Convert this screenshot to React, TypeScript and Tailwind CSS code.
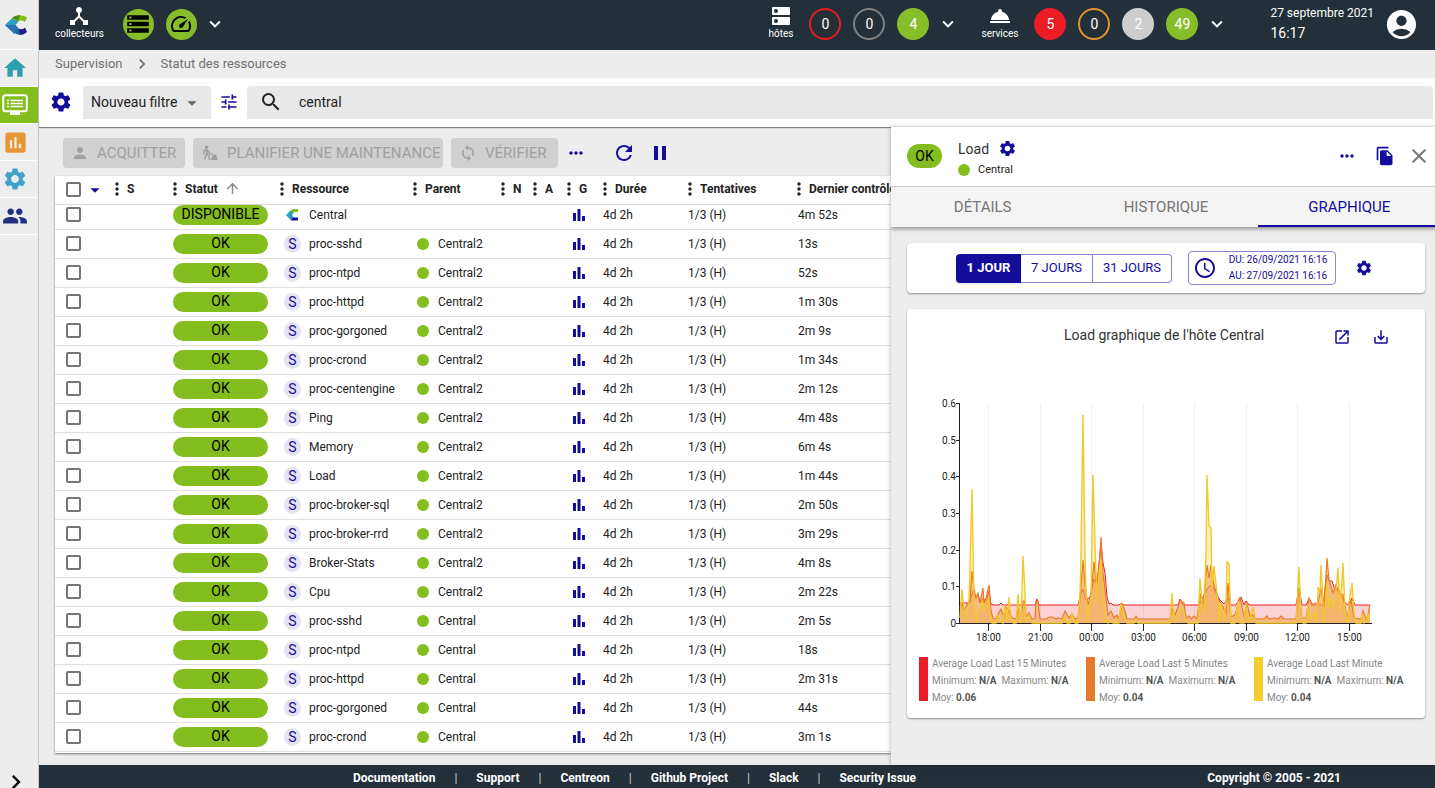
import React from "react";
import {
  MdAccessTime,
  MdAccountCircle,
  MdArrowDropDown,
  MdArrowUpward,
  MdChevronRight,
  MdClose,
  MdDeviceHub,
  MdDns,
  MdExpandMore,
  MdFileCopy,
  MdHome,
  MdInsertChart,
  MdLaunch,
  MdMoreHoriz,
  MdMoreVert,
  MdPause,
  MdPeople,
  MdPerson,
  MdRefresh,
  MdRoomService,
  MdSaveAlt,
  MdSearch,
  MdSettings,
  MdSpeed,
  MdStorage,
  MdSync,
  MdTune,
} from "react-icons/md";

const Logo: React.FC<{ className: string }> = ({ className }) => (
  <svg viewBox="0 0 24 22" className={className} aria-hidden="true">
    <path d="M1 11 10 2.5 15 7 11.5 11 15 15 10 19.500Z" fill="#2a9fc4" />
    <path d="M1 11h10.500L15 15l-4.500 5Z" fill="#2b74b8" />
    <path d="M8.500 4C12 .5 19 .5 23 3.500L21 8c-2.500-2-5-2-7.500-.5L9 5Z" fill="#84bd1e" />
    <path d="M8.500 4C10 2 13 1 16 1.200L14 7Z" fill="#4f8a10" />
    <path d="M10 18l4.500-3.500c1.500 1 3 1.200 4 .8L20 20c-4 1.600-8 .8-10-2Z" fill="#2a5fae" />
    <path d="M15.500 14.800c2 .8 4 .2 5.500-1.300l2 4.500c-2 2-5 3-7.500 2.500Z" fill="#221d84" />
  </svg>
);

const SmallLogo = () => (
  <svg viewBox="0 0 13 12" className="h-3 w-[13px]" aria-hidden="true">
    <path d="M0 6 5 1l3 2-2 3 2 3-3 2.500Z" fill="#2a9fc4" />
    <path d="M5 1 7 0h5v3H8L7 5Z" fill="#84bd1e" />
    <path d="M5 11.500 7 8.500h5v3Z" fill="#16109c" />
  </svg>
);

const Monitor = () => (
  <svg viewBox="0 0 26 22" className="h-[22px] w-[26px]" fill="none" aria-hidden="true">
    <rect x="1.250" y="1.250" width="23.500" height="16" rx="2" stroke="#fff" strokeWidth="2" />
    <path d="M8 18h10v3H8z" fill="#fff" />
    <path d="M5 6.500h2M8.500 6.500H21M5 9.500h2M8.500 9.500H21M5 12.500h2M8.500 12.500H21" stroke="#fff" strokeWidth="1.500" />
  </svg>
);

const Worker = () => (
  <svg viewBox="0 0 16 16" className="h-4 w-4" aria-hidden="true">
    <circle cx="4.500" cy="2.200" r="1.600" fill="#9e9e9e" />
    <path
      d="M4.500 4.500 2 6v3.500M4.500 4.500l.5 4-2.500 6M5 8.500l2 2.500.5 4M5 5l2.500 3 3 2"
      stroke="#9e9e9e"
      strokeWidth="1.500"
      fill="none"
    />
    <path d="M8.500 15 11 10l3-.5L15.500 15Z" fill="#9e9e9e" />
  </svg>
);

const Bars = () => (
  <svg viewBox="0 0 14 14" className="h-[14px] w-[14px]" fill="#140d9c" aria-hidden="true">
    <path d="M1 5h3v8H1zM5.500 1h3v12h-3zM10 8h3v5h-3z" />
  </svg>
);

interface CounterProps {
  value: string;
  tone: string;
}

const Counter: React.FC<CounterProps> = ({ value, tone }) => (
  <a
    href="#"
    className={`flex h-8 w-8 items-center justify-center rounded-full border-2 text-sm text-white ${tone}`}
  >
    {value}
  </a>
);

interface TopLabelProps {
  label: string;
  icon: React.ReactNode;
}

const TopLabel: React.FC<TopLabelProps> = ({ label, icon }) => (
  <div className="flex flex-col items-center pb-1 text-[10px] leading-3 text-white">
    {icon}
    <span>{label}</span>
  </div>
);

const Chevron = () => (
  <button aria-label="Ouvrir" className="flex text-white">
    <MdExpandMore size={22} />
  </button>
);

const TopBar = () => (
  <header className="flex h-[50px] shrink-0 items-center bg-[#232f39] pr-4 pb-[2px] pl-4">
    <TopLabel label="collecteurs" icon={<MdDeviceHub size={24} />} />
    <button aria-label="Base de données" className="ml-[19px] flex h-[31px] w-[31px] items-center justify-center rounded-full bg-[#87bd2b]">
      <MdStorage size={26} />
    </button>
    <button aria-label="Latence" className="mr-[7px] ml-3 flex h-[31px] w-[31px] items-center justify-center rounded-full bg-[#87bd2b]">
      <MdSpeed size={24} />
    </button>
    <Chevron />
    <div className="ml-auto flex items-center gap-3">
      <TopLabel label="hôtes" icon={<MdDns size={24} />} />
      <div className="ml-1 flex items-center gap-3">
        <Counter value="0" tone="border-[#ed1c24]" />
        <Counter value="0" tone="border-[#818285]" />
        <Counter value="4" tone="border-[#87bd2b] bg-[#87bd2b]" />
      </div>
      <div className="-ml-1">
        <Chevron />
      </div>
      <div className="ml-[10px]">
        <TopLabel label="services" icon={<MdRoomService size={24} />} />
      </div>
      <div className="ml-1 flex items-center gap-3">
        <Counter value="5" tone="border-[#ed1c24] bg-[#ed1c24]" />
        <Counter value="0" tone="border-[#e69330]" />
        <Counter value="2" tone="border-[#cdcdcd] bg-[#cdcdcd]" />
        <Counter value="49" tone="border-[#87bd2b] bg-[#87bd2b]" />
      </div>
      <div className="-ml-1">
        <Chevron />
      </div>
    </div>
    <div className="ml-[42px] pb-[3px] text-white">
      <p className="text-xs leading-5">27 septembre 2021</p>
      <p className="text-sm leading-5">16:17</p>
    </div>
    <button aria-label="Profil" className="ml-[10px] text-white">
      <MdAccountCircle size={35} />
    </button>
  </header>
);

const menu = [
  { label: "Accueil", tone: "text-[#2f9fb0]", icon: <MdHome size={26} /> },
  { label: "Supervision", tone: "bg-[#84bd1e]", icon: <Monitor /> },
  { label: "Rapports", tone: "text-[#e79634]", icon: <MdInsertChart size={27} /> },
  { label: "Configuration", tone: "text-[#3fa3c9]", icon: <MdSettings size={26} /> },
  { label: "Administration", tone: "text-[#232f80]", icon: <MdPeople size={26} /> },
];

const Sidebar = () => (
  <aside className="flex w-[39px] shrink-0 flex-col border-r border-[#c8c8c8] bg-[#ededed]">
    <a href="#" aria-label="Centreon" className="flex h-[50px] items-center border-b border-white pl-1">
      <Logo className="h-[22px] w-6" />
    </a>
    {menu.map((item) => (
      <a
        key={item.label}
        href="#"
        aria-label={item.label}
        className={`flex h-[37px] items-center border-b border-white pl-[2px] ${item.tone}`}
      >
        {item.icon}
      </a>
    ))}
    <button aria-label="Déplier le menu" className="mt-auto -mb-2 pl-[2px]">
      <MdChevronRight size={28} />
    </button>
  </aside>
);

const FilterBar = () => (
  <div className="z-10 flex h-[49px] shrink-0 items-center bg-white pr-[2px] pb-px pl-[10px] shadow-[0_1px_1px_rgba(0,0,0,0.45)]">
    <button aria-label="Options" className="text-[#140d9c]">
      <MdSettings size={24} />
    </button>
    <div className="relative ml-[10px]">
      <select
        aria-label="Filtre"
        className="block h-[33px] w-32 appearance-none rounded-t-sm bg-[#e8e8e8] pl-2 text-sm text-[#222]"
      >
        <option>Nouveau filtre</option>
      </select>
      <MdArrowDropDown size={22} className="pointer-events-none absolute top-[6px] right-2 text-[#666]" />
    </div>
    <button aria-label="Critères" className="mx-2 text-[#140d9c]">
      <MdTune size={20} />
    </button>
    <label className="flex h-[33px] flex-1 items-center rounded-t-sm bg-[#e8e8e8] pl-3">
      <MdSearch size={24} className="text-[#222]" />
      <input
        aria-label="Recherche"
        defaultValue="central"
        className="ml-4 flex-1 bg-transparent text-sm text-[#222] outline-none"
      />
    </label>
  </div>
);

interface ActionProps {
  label: string;
  icon: React.ReactNode;
  width: string;
}

const Action: React.FC<ActionProps> = ({ label, icon, width }) => (
  <button
    disabled
    className={`flex h-[30px] shrink-0 items-center gap-2 rounded bg-[#d0d0d0] pl-2 text-[15px] whitespace-nowrap text-[#a0a0a0] ${width}`}
  >
    <span className="flex w-[18px] justify-center">{icon}</span>
    {label}
  </button>
);

const Checkbox: React.FC<{ label: string }> = ({ label }) => (
  <input
    type="checkbox"
    aria-label={label}
    className="block h-[15px] w-[15px] shrink-0 appearance-none rounded-xs border-2 border-[#757575] bg-white"
  />
);

const headers = ["S", "Statut", "Ressource", "Parent", "N", "A", "G", "Durée", "Tentatives", "Dernier contrôle"];

const rows = [
  ["Central", "", "4m 52s"],
  ["proc-sshd", "Central2", "13s"],
  ["proc-ntpd", "Central2", "52s"],
  ["proc-httpd", "Central2", "1m 30s"],
  ["proc-gorgoned", "Central2", "2m 9s"],
  ["proc-crond", "Central2", "1m 34s"],
  ["proc-centengine", "Central2", "2m 12s"],
  ["Ping", "Central2", "4m 48s"],
  ["Memory", "Central2", "6m 4s"],
  ["Load", "Central2", "1m 44s"],
  ["proc-broker-sql", "Central2", "2m 50s"],
  ["proc-broker-rrd", "Central2", "3m 29s"],
  ["Broker-Stats", "Central2", "4m 8s"],
  ["Cpu", "Central2", "2m 22s"],
  ["proc-sshd", "Central", "2m 5s"],
  ["proc-ntpd", "Central", "18s"],
  ["proc-httpd", "Central", "2m 31s"],
  ["proc-gorgoned", "Central", "44s"],
  ["proc-crond", "Central", "3m 1s"],
];

const Listing = () => (
  <div className="mt-2 mb-3 ml-4 flex-1 overflow-hidden bg-white shadow-[0_1px_2px_rgba(0,0,0,0.5)]">
    <table className="w-[900px] table-fixed border-collapse text-xs text-[#222]">
      <colgroup>
        <col className="w-[52px]" />
        <col className="w-[58px]" />
        <col className="w-[107px]" />
        <col className="w-[133px]" />
        <col className="w-[88px]" />
        <col className="w-8" />
        <col className="w-[34px]" />
        <col className="w-9" />
        <col className="w-[85px]" />
        <col className="w-[109px]" />
        <col />
      </colgroup>
      <thead>
        <tr className="h-7 border-b border-[#d8d8d8]">
          <th>
            <div className="flex items-center pl-[11px]">
              <Checkbox label="Tout sélectionner" />
              <MdArrowDropDown size={22} className="ml-[3px] shrink-0 text-[#140d9c]" />
            </div>
          </th>
          {headers.map((header) => (
            <th key={header}>
              <div className="flex items-center pb-[2px] whitespace-nowrap">
                <MdMoreVert size={20} className="shrink-0" />
                {header}
                {header === "Statut" && <MdArrowUpward size={17} className="ml-[6px] text-[#888]" />}
              </div>
            </th>
          ))}
        </tr>
      </thead>
      <tbody>
        {rows.map(([name, parent, last], index) => (
          <tr
            key={index}
            className={`border-b border-[#dedede] ${index === 0 ? "h-6 [&>td]:pb-1" : "h-[29px]"}`}
          >
            <td className="pl-[11px]">
              <Checkbox label={`${name} ${last}`} />
            </td>
            <td></td>
            <td className="pl-2">
              <div className="h-5 w-[95px] rounded-full bg-[#84bd1e] text-center text-sm leading-[18px] text-black">
                {index === 0 ? "DISPONIBLE" : "OK"}
              </div>
            </td>
            <td className="pl-3">
              <div className="flex items-center gap-2">
                {index === 0 ? (
                  <span className="flex w-[17px] justify-center">
                    <SmallLogo />
                  </span>
                ) : (
                  <span className="h-[18px] w-[17px] rounded-full bg-[#e4e3f2] text-center text-sm leading-[18px] text-[#140d9c]">
                    S
                  </span>
                )}
                <a href="#" className="whitespace-nowrap">{name}</a>
              </div>
            </td>
            <td className="pl-3">
              {parent && (
                <div className="flex items-center gap-[9px]">
                  <span className="h-3 w-3 rounded-full bg-[#84bd1e]" />
                  <a href="#">{parent}</a>
                </div>
              )}
            </td>
            <td></td>
            <td></td>
            <td className="pl-[13px]">
              <Bars />
            </td>
            <td className="pl-2">4d 2h</td>
            <td className="pl-2">1/3 (H)</td>
            <td className="pl-[9px]">{last}</td>
          </tr>
        ))}
      </tbody>
    </table>
  </div>
);

// pairs of x offset and height above the zero line
const red =
  "0 20 10 20 11 25 13 32 16 26 18 28 21 20 23 25 26 20 29 32 31 19 33 18 39 18 41 20 43 18 75 18 77 24 79 18 118 18 121 30 123 34 126 22 130 26 134 44 137 38 141 80 143 60 145 50 147 26 149 19 151 20 153 18 159 18 161 20 164 18 218 18 220 24 223 18 239 18 241 22 247 34 251 38 255 33 259 24 264 19 268 25 271 18 276 18 278 22 281 26 284 18 286 22 289 18 336 18 339 35 342 18 346 18 349 24 353 18 363 18 367 48 369 42 372 42 375 33 378 35 380 30 385 20 388 18 392 25 395 18 410 18";
const orange =
  "0 15 2 20 4 13 6 16 8 20 10 24 12 52 14 34 16 25 18 30 20 20 23 35 24 20 26 25 29 38 31 12 33 5 36 4 38 9 41 14 44 6 46 16 49 12 52 5 56 4 59 15 61 5 63 22 65 22 66 6 69 10 72 4 75 4 76 22 78 22 80 4 86 4 89 6 92 6 96 4 98 5 102 4 105 12 109 5 112 9 115 4 118 5 120 24 123 63 125 38 128 18 131 28 134 61 136 40 139 55 141 86 143 50 146 25 148 8 151 12 154 5 157 8 159 4 162 19 165 12 167 4 174 4 176 7 178 4 210 4 212 14 215 8 218 16 220 23 224 20 226 5 229 7 231 4 234 7 237 4 239 20 241 30 243 15 247 58 249 45 251 58 254 38 258 24 262 18 266 10 268 40 271 6 275 8 280 26 284 6 287 19 290 7 293 8 296 4 304 4 307 7 309 4 315 5 318 4 321 7 324 4 336 4 339 35 342 5 346 5 349 25 352 18 355 20 358 20 361 35 364 15 367 65 369 43 373 30 376 38 379 30 383 28 387 5 391 24 394 5 401 4 403 12 406 4 408 9 410 18";
const yellow =
  "0 5 2 34 4 14 6 3 8 12 9 20 12 134 14 20 16 0 18 12 20 14 22 22 24 12 26 20 29 25 30 10 32 0 36 0 38 9 40 2 43 0 45 18 47 2 49 26 51 4 53 0 56 0 58 29 60 3 61 0 63 67 65 30 66 0 69 8 72 0 102 0 104 6 107 0 110 0 112 9 115 0 118 0 120 30 121 70 123 208 125 70 126 30 128 0 129 15 131 25 133 148 135 80 137 20 139 50 141 63 143 30 145 2 148 0 150 4 153 0 159 0 161 20 164 8 167 0 174 0 176 4 178 0 210 0 212 30 213 15 215 0 218 8 220 14 223 15 225 5 228 0 238 0 240 45 242 20 244 10 246 70 247 148 249 97 251 95 252 35 254 57 257 30 259 0 261 20 264 2 266 20 267 62 269 58 271 0 275 0 278 22 280 0 284 0 286 20 289 0 293 16 296 0 336 0 339 56 341 10 343 0 346 0 348 18 351 3 354 10 357 2 358 36 360 30 361 58 364 0 367 40 369 15 371 25 373 15 375 18 378 55 380 10 383 60 385 12 388 0 389 20 392 40 394 10 396 0 401 0 402 10 404 0 408 9 410 0";

const ORIGIN_X = 53;
const ORIGIN_Y = 228;

const toLine = (series: string) => {
  const values = series.split(" ").map(Number);
  const points: string[] = [];
  for (let i = 0; i < values.length; i += 2) {
    points.push(`${ORIGIN_X + values[i]} ${ORIGIN_Y - values[i + 1]}`);
  }
  return `M${points.join("L")}`;
};

const toArea = (series: string) => `${toLine(series)}V${ORIGIN_Y}H${ORIGIN_X}Z`;

const Chart = () => (
  <svg viewBox="0 0 518 250" className="block w-full text-[10px]" role="img" aria-label="Load">
    {["18:00", "21:00", "00:00", "03:00", "06:00", "09:00", "12:00", "15:00"].map((hour, i) => {
      const x = Math.round(82 + i * 51.5) - 0.5;
      return (
        <g key={hour}>
          <path d={`M${x} 8V228`} stroke="#f1f1f1" />
          <path d={`M${x} 228v8`} stroke="#222" />
          <text x={x} y="246" textAnchor="middle" fill="#222">
            {hour}
          </text>
        </g>
      );
    })}
    {["0", "0.1", "0.2", "0.3", "0.4", "0.5", "0.6"].map((value, i) => {
      const y = Math.round(228 - i * 36.7) + 0.5;
      return (
        <g key={value}>
          <path d={`M49 ${y}h4`} stroke="#222" />
          <text x="49" y={y + 3} textAnchor="end" fill="#222">
            {value}
          </text>
        </g>
      );
    })}
    <path d="M52.5 8V228.500H465" stroke="#222" fill="none" />
    <path d={toArea(yellow)} fill="#f3cd2e" fillOpacity="0.3" />
    <path d={toArea(red)} fill="#ed1c24" fillOpacity="0.2" />
    <path d={toLine(red)} fill="none" stroke="#ed1c24" />
    <path d={toArea(orange)} fill="#f2a850" fillOpacity="0.6" />
    <path d={toLine(orange)} fill="none" stroke="#e6792b" strokeWidth="1.200" />
    <path d={toLine(yellow)} fill="none" stroke="#f1c92c" strokeWidth="1.400" />
  </svg>
);

const legend = [
  { name: "Average Load Last 15 Minutes", average: "0.06", tone: "bg-[#ed1c24]" },
  { name: "Average Load Last 5 Minutes", average: "0.04", tone: "bg-[#e6792b]" },
  { name: "Average Load Last Minute", average: "0.04", tone: "bg-[#f3cd2e]" },
];

const GraphCard = () => (
  <section className="mt-4 rounded bg-white pb-3 shadow-[0_1px_2px_rgba(0,0,0,0.4)]">
    <div className="flex h-[86px] items-start pt-4 pr-[35px]">
      <h2 className="ml-[157px] flex-1 text-sm leading-5 text-[#333]">Load graphique de l'hôte Central</h2>
      <button aria-label="Ouvrir" className="mt-[3px] text-[#140d9c]">
        <MdLaunch size={18} />
      </button>
      <button aria-label="Exporter" className="mt-[3px] ml-[21px] text-[#140d9c]">
        <MdSaveAlt size={18} />
      </button>
    </div>
    <Chart />
    <div className="mt-3 grid grid-cols-[167px_168px_1fr] pl-3 text-[10px] leading-[17px] whitespace-nowrap text-[#888]">
      {legend.map((entry) => (
        <div key={entry.name} className="flex items-start gap-1">
          <span className={`h-11 w-[9px] shrink-0 ${entry.tone}`} />
          <div className="-mt-[2px]">
            <p>{entry.name}</p>
            <p>
              Minimum: <b className="text-[#555]">N/A</b>&nbsp; Maximum: <b className="text-[#555]">N/A</b>
            </p>
            <p>
              Moy: <b className="text-[#555]">{entry.average}</b>
            </p>
          </div>
        </div>
      ))}
    </div>
  </section>
);

const DetailsPanel = () => (
  <aside className="z-20 w-[544px] shrink-0 overflow-hidden bg-[#ededed] shadow-[0_0_4px_rgba(0,0,0,0.35)]">
    <div className="flex h-full w-[550px] flex-col">
      <div className="flex h-[60px] shrink-0 items-center border-b border-[#d4d4d4] bg-white pr-[10px] pb-px pl-4">
        <span className="flex h-6 w-[35px] items-center justify-center rounded-full bg-[#84bd1e] text-sm text-black">
          OK
        </span>
        <div className="ml-4 flex-1">
          <div className="flex items-center gap-[9px] pt-1 text-sm leading-5 text-[#333]">
            Load
            <button aria-label="Configurer" className="text-[#140d9c]">
              <MdSettings size={19} />
            </button>
          </div>
          <div className="mt-[3px] flex items-center gap-2 text-[11px] leading-4 text-[#222]">
            <span className="h-3 w-3 rounded-full bg-[#84bd1e]" />
            <a href="#">Central</a>
          </div>
        </div>
        <button aria-label="Plus" className="text-[#140d9c]">
          <MdMoreHoriz size={20} />
        </button>
        <button aria-label="Copier" className="ml-[18px] text-[#140d9c]">
          <MdFileCopy size={20} />
        </button>
        <button aria-label="Fermer" className="ml-3 text-[#757575]">
          <MdClose size={24} />
        </button>
      </div>
      <div className="z-10 grid h-10 shrink-0 grid-cols-3 bg-[#f4f4f4] text-[15px] text-[#757575] shadow-[0_2px_4px_rgba(0,0,0,0.4)]">
        <button>DÉTAILS</button>
        <button>HISTORIQUE</button>
        <button className="border-b-2 border-[#140d9c] pt-[2px] text-[#140d9c]">GRAPHIQUE</button>
      </div>
      <div className="px-4 pt-4">
        <div className="flex h-[50px] items-center justify-center gap-4 rounded bg-white shadow-[0_1px_2px_rgba(0,0,0,0.4)]">
          <div className="flex h-[29px] text-[13px] text-[#140d9c]">
            <button className="w-[65px] rounded-l bg-[#140d9c] font-bold text-white shadow">1 JOUR</button>
            <button className="w-[72px] border border-l-0 border-[#8a86cd]">7 JOURS</button>
            <button className="w-[79px] rounded-r border border-l-0 border-[#8a86cd]">31 JOURS</button>
          </div>
          <button className="flex h-[34px] w-[148px] items-center gap-2 rounded border border-[#8a86cd] px-1 text-[10px] text-[#140d9c]">
            <MdAccessTime size={24} className="shrink-0" />
            <span className="flex-1 text-center leading-4 whitespace-nowrap">
              DU: 26/09/2021 16:16
              <br />
              AU: 27/09/2021 16:16
            </span>
          </button>
          <button aria-label="Options du graphique" className="flex w-6 justify-center text-[#140d9c]">
            <MdSettings size={18} />
          </button>
        </div>
        <GraphCard />
      </div>
    </div>
  </aside>
);

const links = ["Documentation", "Support", "Centreon", "Github Project", "Slack", "Security Issue"];

const Footer = () => (
  <footer className="flex h-[23px] shrink-0 items-center justify-between bg-[#232f39] pt-[3px] pr-[94px] pl-[314px] text-xs font-bold text-white">
    <nav className="flex items-center">
      {links.map((link, i) => (
        <React.Fragment key={link}>
          {i > 0 && <span className="mx-[19px] font-normal text-[#ccc]">|</span>}
          <a href="#">{link}</a>
        </React.Fragment>
      ))}
    </nav>
    <span>Copyright © 2005 - 2021</span>
  </footer>
);

const App: React.FC = () => {
  return (
    <div className="flex h-screen overflow-hidden bg-[#ededed] font-['Roboto',sans-serif]">
      <Sidebar />
      <div className="flex min-w-0 flex-1 flex-col">
        <TopBar />
        <nav className="flex h-7 shrink-0 items-center pl-4 text-[13px] text-[#707070]">
          <a href="#">Supervision</a>
          <MdChevronRight size={20} className="mx-[9px]" />
          <a href="#">Statut des ressources</a>
        </nav>
        <FilterBar />
        <div className="flex min-h-0 flex-1">
          <main className="flex min-w-0 flex-1 flex-col">
            <div className="mt-[11px] flex items-center gap-2 pl-6">
              <Action label="ACQUITTER" icon={<MdPerson size={18} />} width="w-[122px]" />
              <Action label="PLANIFIER UNE MAINTENANCE" icon={<Worker />} width="w-[250px]" />
              <Action label="VÉRIFIER" icon={<MdSync size={18} />} width="w-[107px]" />
              <button aria-label="Plus d'actions" className="text-[#140d9c]">
                <MdMoreHoriz size={20} />
              </button>
              <button aria-label="Actualiser" className="ml-[18px] text-[#140d9c]">
                <MdRefresh size={24} />
              </button>
              <button aria-label="Pause" className="ml-1 text-[#140d9c]">
                <MdPause size={24} />
              </button>
            </div>
            <Listing />
          </main>
          <DetailsPanel />
        </div>
        <Footer />
      </div>
    </div>
  );
};

export default App;
